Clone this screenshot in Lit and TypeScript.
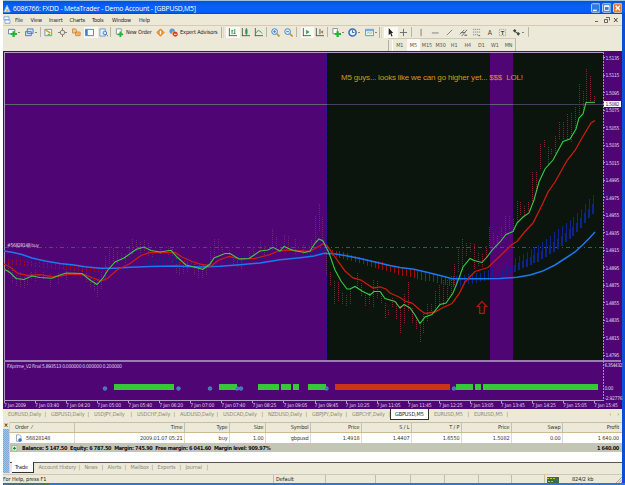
import { css, html, LitElement, svg } from "lit";
import { customElement, property } from "lit/decorators.js";
import { classMap } from "lit/directives/class-map.js";

type Point = [number, number];

const GREEN_MA: Point[] = [
  [4, 269], [10, 272.5], [16, 278.5], [24, 279.5], [32, 276], [40, 277.5],
  [52, 278.3], [60, 275], [66, 273], [82, 273.5], [90, 280], [97, 284.5],
  [103, 278], [108, 270], [115, 262], [124, 258], [136, 249.5], [144, 247],
  [151, 250.5], [160, 252], [171, 250.3], [177, 257], [186, 265], [194, 267],
  [203, 269.3], [210, 264], [214, 258], [225, 253.5], [230, 253.5],
  [239, 259], [249, 258.5], [260, 251], [268, 250], [273, 247.3], [280, 251],
  [284, 246.5], [293, 250.5], [305, 252.5], [310, 251], [315, 243],
  [319, 239], [323, 241], [329, 253], [335, 270], [341, 281], [347, 289],
  [350, 289], [355, 286.5], [362, 291], [370, 295], [374, 291.5],
  [380, 291.5], [385, 298.5], [395, 301.5], [400, 308], [404, 304.5],
  [410, 308], [415, 315], [420, 323.5], [425, 317], [432, 314.5],
  [440, 304.5], [446, 303], [453, 293], [459, 278], [463, 267], [470, 258.5],
  [474, 260.5], [482, 262.5], [487, 257], [493, 249], [500, 242],
  [506, 234.5], [513, 231.5], [517, 223], [523, 217], [529, 213], [534, 200],
  [539, 182], [545, 169], [553, 160], [563, 141.5], [570, 139], [576, 129],
  [579, 118], [583, 114], [586, 102.5], [595, 102.3],
];

const RED_MA: Point[] = [
  [4, 264], [10, 267], [18, 273.5], [28, 275.5], [40, 274.7], [52, 276.7],
  [60, 276], [70, 274], [84, 274.3], [93, 278], [101, 281], [108, 278],
  [117, 270], [130, 263.5], [141, 255.5], [150, 252.5], [175, 252.5],
  [182, 257], [192, 261.5], [202, 264.5], [211, 266], [218, 260.5],
  [229, 256.5], [241, 259], [255, 258.3], [270, 254.7], [278, 251],
  [290, 250], [310, 251.5], [316, 248], [323, 244], [327, 245.5],
  [335, 257], [345, 271], [353, 278], [361, 280], [373, 288], [380, 287],
  [386, 289], [390, 293], [400, 297.5], [405, 301], [412, 303], [420, 310],
  [425, 313.5], [435, 312], [443, 307.5], [452, 303.5], [459, 294],
  [465, 282], [475, 271.5], [488, 267.5], [500, 256], [512, 244.5],
  [517, 241.5], [525, 231.5], [533, 223], [543, 203], [548, 192],
  [555, 182], [567, 160.5], [575, 150.5], [582, 138], [591, 123],
  [595, 120.5],
];

const BLUE_MA: Point[] = [
  [4, 251], [12, 252.3], [22, 254.5], [32, 258], [45, 261], [60, 263.5],
  [74, 265], [85, 266.7], [100, 268.3], [115, 268.3], [130, 267.3],
  [150, 266.5], [175, 266], [200, 267], [220, 266.3], [240, 264.7],
  [260, 263], [280, 259.7], [300, 257.7], [314, 256], [324, 253.3],
  [334, 253.7], [345, 255.5], [360, 258.5], [375, 262], [390, 265.5],
  [400, 267.4], [414, 269.3], [428, 272.5], [444, 276.5], [452, 278.7],
  [480, 278.8], [500, 278.5], [517, 277.3], [530, 275], [542, 271.3],
  [555, 265], [565, 258.5], [575, 252], [583, 244.5], [590, 237.5],
  [595, 232],
];

// x, high, low
const CANDLES: [number, number, number][] = [
  [8, 264, 275], [12, 268, 283], [16, 275, 287], [20, 272, 287],
  [24, 277, 288], [27, 276, 286], [31, 272, 279], [35, 270, 281],
  [43, 272, 280], [50, 274, 287], [58, 273, 284], [66, 271, 281],
  [74, 268, 276], [82, 269, 277], [86, 273, 283], [90, 276, 288],
  [94, 278, 292], [97, 280, 297], [101, 272, 290], [105, 256, 282],
  [109, 247, 270], [113, 248, 262], [117, 252, 264], [121, 253, 261],
  [125, 254, 263], [129, 246, 258], [132, 239, 254], [136, 240, 252],
  [140, 242, 253], [144, 240, 252], [148, 243, 256], [152, 250, 257],
  [160, 249, 255], [168, 246, 256], [172, 249, 264], [176, 256, 274],
  [179, 262, 276], [183, 263, 275], [187, 263, 272], [194, 264, 275],
  [198, 267, 278], [202, 271, 279], [206, 268, 275], [210, 251, 265],
  [214, 239, 256], [218, 239, 251], [222, 247, 253], [229, 250, 257],
  [233, 257, 265], [237, 260, 268], [241, 260, 269], [249, 251, 259],
  [253, 247, 256], [260, 242, 251], [264, 246, 255], [272, 229, 250],
  [276, 237, 252], [284, 235, 247], [288, 236, 251], [295, 239, 255],
  [303, 245, 254], [311, 240, 250], [315, 216, 243], [319, 204, 232],
  [322, 217, 244], [326, 250, 275], [330, 272, 285], [334, 281, 305],
  [338, 282, 301], [342, 293, 304], [346, 295, 306], [350, 289, 305],
  [357, 273, 288], [361, 283, 297], [365, 295, 306], [369, 293, 305],
  [373, 280, 307], [377, 281, 298], [381, 292, 304], [385, 303, 319],
  [388, 310, 316], [392, 298, 308], [396, 302, 320], [400, 306, 333],
  [404, 294, 323], [408, 282, 312], [412, 308, 324], [416, 318, 329],
  [420, 325, 342], [423, 314, 334], [427, 304, 321], [431, 304, 314],
  [435, 291, 310], [439, 285, 306], [443, 280, 305], [447, 280, 300],
  [451, 276, 295], [454, 264, 285], [458, 247, 272], [462, 239, 271],
  [466, 243, 257], [470, 243, 253], [474, 244, 269], [478, 253, 267],
  [482, 254, 268], [486, 246, 258], [489, 227, 248], [493, 233, 245],
  [497, 236, 243], [501, 227, 240], [505, 216, 236], [509, 216, 230],
  [513, 219, 232], [517, 201, 222], [520, 202, 215], [524, 206, 216],
  [528, 202, 212], [532, 172, 202], [536, 172, 190], [540, 144, 170],
  [544, 140, 148], [548, 147, 164], [551, 149, 154], [555, 136, 153],
  [559, 122, 140], [563, 122, 140], [567, 114, 139], [571, 113, 143],
  [575, 107, 131], [579, 84, 115], [583, 91, 110], [586, 69, 103],
  [590, 76, 102], [594, 96, 106],
];

const CLOUD_TOP: Point[] = [
  [4, 259], [60, 264], [105, 268], [110, 265], [150, 259], [176, 256],
  [180, 259], [205, 265], [215, 261], [240, 256], [300, 253], [325, 248],
  [334, 250], [400, 267], [450, 277], [456, 276], [480, 273], [500, 265],
  [520, 256], [540, 244], [560, 228], [575, 216], [595, 193],
];

const CLOUD_BOTTOM: Point[] = [
  [4, 265], [60, 270], [105, 272], [110, 271], [150, 267], [176, 264],
  [180, 264], [205, 267], [215, 265], [240, 262], [300, 257], [325, 254],
  [334, 256], [400, 275], [450, 286], [456, 287], [480, 282], [500, 278],
  [520, 270], [540, 261], [560, 248], [575, 235], [595, 212],
];

const SIGNALS: [number, number, string][] = [
  [114, 174, "up"], [219, 237, "up"], [257.5, 279, "up"], [281, 291, "up"],
  [293, 299, "up"], [308, 326, "up"], [335, 450, "down"],
  [455.5, 473, "up"], [475, 481, "up"], [483, 597.5, "up"],
];

const PRICES = [
  "1.5135", "1.5115", "1.5095", "1.5075", "1.5055", "1.5035", "1.5015",
  "1.4995", "1.4975", "1.4955", "1.4935", "1.4915", "1.4895", "1.4875",
  "1.4855", "1.4835", "1.4815", "1.4795",
];

const TIMES = [
  "2009", "03:40", "04:20", "05:00", "05:40", "06:20", "07:00", "07:40",
  "08:25", "09:05", "09:45", "10:25", "11:05", "11:45", "12:25", "13:05",
  "13:45", "14:25", "15:05", "15:45",
];

function valueAt(line: Point[], x: number) {
  for (let i = 1; i < line.length; i++) {
    const [x0, y0] = line[i - 1];
    const [x1, y1] = line[i];
    if (x <= x1) return y0 + ((x - x0) / (x1 - x0)) * (y1 - y0);
  }
  return line[line.length - 1][1];
}

function isBearish(x: number) {
  return x < 108 || (x > 178 && x < 213) || (x > 330 && x < 454);
}

@customElement("price-chart")
export class PriceChart extends LitElement {
  static styles = css`
    :host {
      display: block;
      height: 358px;
      background: #4f0674;
    }
    svg {
      display: block;
      width: 620px;
      height: 358px;
      shape-rendering: crispEdges;
    }
    text {
      font-family: "DejaVu Sans Condensed", "DejaVu Sans", sans-serif;
      font-size: 5.1px;
      fill: #ded0e8;
    }
    .session {
      fill: #0b140d;
    }
    .frame {
      fill: #b49cc8;
    }
    .divider {
      fill: #9a7bb4;
    }
    .axis {
      stroke: #a58cbc;
      stroke-dasharray: 2 1;
    }
    .ma {
      fill: none;
      stroke-width: 1.1;
      shape-rendering: auto;
    }
    .green {
      stroke: #3bcc44;
    }
    .red {
      stroke: #cc1c0e;
      stroke-width: 1.3;
    }
    .blue {
      stroke: #1c78ee;
      stroke-width: 1.5;
    }
    .candle {
      stroke: #86232f;
      stroke-dasharray: 1 1;
    }
    .candle.dim {
      stroke: #6b2a68;
    }
    .cloud-down {
      stroke: #a00c0c;
    }
    .cloud-up {
      stroke: #0c2390;
    }
    .order {
      stroke: #2d6063;
      stroke-dasharray: 4 3 1 3;
    }
    .bid {
      stroke: #45405f;
    }
    .bid-green {
      stroke: #5d6668;
    }
    .day {
      stroke: #1b1b9c;
      stroke-dasharray: 2 1;
    }
    .arrow {
      fill: none;
      stroke: #b51414;
      stroke-width: 1.2;
      shape-rendering: auto;
    }
    .up {
      fill: #38c738;
    }
    .down {
      fill: #cc3318;
    }
    .dot {
      fill: #3678b4;
      stroke: #6aa2cc;
      stroke-width: 0.6;
      shape-rendering: auto;
    }
    .note {
      font-family: "Liberation Sans", Arial, sans-serif;
      font-size: 8px;
      fill: #d69a12;
    }
    .tag {
      fill: #ffffff;
    }
    .tag-text {
      fill: #4f0674;
    }
  `;

  renderLine(points: Point[], name: string) {
    return svg`<polyline class="ma ${name}" points=${points.map((p) => p.join(",")).join(" ")} />`;
  }

  renderCloud() {
    const bars: number[] = [];
    for (let x = 8.5; x < 597; x += 3.9) bars.push(Math.floor(x) + 0.5);
    return bars.map((x) => {
      const top = valueAt(CLOUD_TOP, x);
      const bottom = valueAt(CLOUD_BOTTOM, x);
      const name = isBearish(x) ? "cloud-down" : "cloud-up";
      const half = (top + bottom) / 2;
      const dash = x < 326 ? "2 1" : "none";
      return svg`
        <line class=${name} stroke-dasharray=${dash} x1=${x} x2=${x} y1=${top} y2=${bottom} />
        ${x > 500 ? svg`<line class=${name} x1=${x - 1} x2=${x - 1} y1=${half} y2=${bottom} />` : ""}
      `;
    });
  }

  render() {
    return html`
      <svg viewBox="3 51 620 358">
        <rect class="session" x="327" y="53" width="163" height="307" />
        <rect class="session" x="513" y="53" width="90" height="307" />
        <rect class="frame" x="4" y="52" width="599" height="1" />
        <rect class="frame" x="4" y="52" width="1" height="349" />
        <rect class="divider" x="4" y="360" width="617" height="2" />
        <line class="day" x1="326.5" x2="326.5" y1="53" y2="360" />
        <line class="bid" x1="5" x2="603" y1="104.5" y2="104.5" />
        <line class="bid-green" x1="5" x2="327" y1="104.5" y2="104.5" />
        <line class="bid-green" x1="490" x2="513" y1="104.5" y2="104.5" />
        <line class="order" x1="5" x2="603" y1="247.5" y2="247.5" />
        ${CANDLES.map(([x, high, low]) => {
          const dim = x < 327 || (x > 490 && x < 513);
          return svg`<line class="candle ${dim ? "dim" : ""}" x1=${x + 0.5} x2=${x + 0.5} y1=${high} y2=${low} />`;
        })}
        ${this.renderCloud()} ${this.renderLine(BLUE_MA, "blue")}
        ${this.renderLine(RED_MA, "red")} ${this.renderLine(GREEN_MA, "green")}
        <path
          class="arrow"
          d="M482 301.5 L486.7 306.5 H484.3 V313.3 H479.7 V306.5 H477.3 Z"
        />
        <text class="note" x="341" y="80" textLength="182" xml:space="preserve">M5 guys... looks like we can go higher yet... $$$&#160; LOL!</text>
        <text x="7" y="247" textLength="32">#56828148 buy</text>
        <text x="7" y="368" textLength="115">FXprime_V2 Final 5.893513 0.000000 0.000000 0.200000</text>

        ${SIGNALS.map(
          ([from, to, name]) =>
            svg`<rect class=${name} x=${from} y="384" width=${to - from} height="6" />`,
        )}
        ${[105, 178.5, 210, 237, 241, 326.5, 454].map(
          (x) => svg`<circle class="dot" cx=${x} cy="388.5" r="1.8" />`,
        )}

        <line class="axis" x1="603.5" x2="603.5" y1="52" y2="401" />
        <rect class="frame" x="4" y="400" width="600" height="1" />
        ${TIMES.map(
          (time, i) => svg`
            <rect class="frame" x=${4 + i * 31.05} y="400" width="1" height="3" />
            <text x=${4 + i * 31.05} y="407" textLength=${i === 0 ? 22 : 24}>7 Jan ${time}</text>
          `,
        )}
        ${PRICES.map(
          (price, i) => svg`
            <rect class="frame" x="603" y=${57 + i * 17.5} width="2" height="1" />
            <text x="605.5" y=${59.5 + i * 17.5} textLength="14">${price}</text>
          `,
        )}
        <rect class="tag" x="604" y="101" width="17" height="6" />
        <text class="tag-text" x="605.5" y="106" textLength="14">1.5082</text>
        <text x="604.5" y="367" textLength="18">6.354432</text>
        <text x="604.5" y="390" textLength="9">0.00</text>
        <text x="604.5" y="399.5" textLength="18">-2.92776</text>
      </svg>
    `;
  }
}

const ICONS: Record<string, unknown> = {
  newChart: svg`<path fill="#fff" stroke="#4a7cb8" d="M.5 1.500h7v5h-7z"/><path fill="#25b42e" d="M5 3.500h2.500v2H10v2.300H7.500V10H5V7.800H3V5.500h2z"/>`,
  profiles: svg`<path fill="#cfe0f4" stroke="#4a7cb8" d="M2.500 1h6.500v5h-6.500zM.5 4h6.500v4.500H.5z"/>`,
  market: svg`<path fill="#fff6dc" stroke="#5c91c8" d="M1 1.500h7.500v7H1z"/><path stroke="#dd8a1c" stroke-width="1.500" d="M2 2.500l5 3"/><path stroke="#2c9650" d="M4 7h3"/>`,
  crosshair: svg`<circle cx="5" cy="5" r="2.500" fill="none" stroke="#777"/><path stroke="#777" d="M5 0v3M5 7v3M0 5h3M7 5h3"/>`,
  navigator: svg`<path fill="#f2c98c" stroke="#cc8444" d="M.5 1h3.500l1 1.500v3H.5zM4 4.500h5v4H4z"/><path fill="#f0b040" d="M5 5.500l2-1 2 2-2 2z"/>`,
  terminal: svg`<path fill="#fff" stroke="#3d7cc9" d="M.5 1.500h9v7h-9z"/><path fill="#3d7cc9" d="M1 2h2v6H1z"/>`,
  tester: svg`<path fill="#e9f1f9" stroke="#6a9bce" d="M1 1h6v8H1z"/><circle cx="6.500" cy="5.500" r="2" fill="#cfe4ff" stroke="#3d7cc9"/><path stroke="#3d7cc9" d="M8 7l2 2"/>`,
  order: svg`<path fill="#fff" stroke="#7f94a8" d="M1.500 1h5.500v6h-5.500z"/><path fill="#25b42e" d="M5 4h2v2h2v2H7v2H5V8H3V6h2z"/>`,
  editor: svg`<path fill="#f3a33a" stroke="#c96a18" d="M5 1l4 4-4 4-4-4z"/><path stroke="#fff" d="M5 3v4"/>`,
  expert: svg`<circle cx="3.500" cy="3.500" r="3" fill="#5c9bd2"/><path fill="#e8ae44" d="M3 4h5v3H3z"/><circle cx="7" cy="7" r="2.700" fill="#d83a20"/><path stroke="#fff" d="M5.500 7h3"/>`,
  bars: svg`<path fill="none" stroke="#555" d="M1.500 0v9M1 8.500h9"/><path stroke="#2c9650" d="M4.500 2v5M4 3h2M7.500 1v6M6 6h2"/>`,
  candles: svg`<path fill="none" stroke="#555" d="M1.500 0v9M1 8.500h9"/><path stroke="#2c9650" stroke-width="2.500" d="M6 1.500v5"/><path stroke="#2c9650" d="M6 0v8"/>`,
  line: svg`<path fill="none" stroke="#555" d="M1.500 0v9M1 8.500h9"/><path fill="none" stroke="#2c9650" d="M2 6c2-4 4-4 7 0"/>`,
  zoomIn: svg`<circle cx="4" cy="4" r="3.200" fill="#d8ecff" stroke="#3d7cc9"/><path stroke="#3d7cc9" d="M2.500 4h3M4 2.500v3"/><path stroke="#cc9134" stroke-width="1.800" d="M6.500 6.500l3 3"/>`,
  zoomOut: svg`<circle cx="4" cy="4" r="3.200" fill="#d8ecff" stroke="#3d7cc9"/><path stroke="#3d7cc9" d="M2.500 4h3"/><path stroke="#cc9134" stroke-width="1.800" d="M6.500 6.500l3 3"/>`,
  scroll: svg`<path fill="none" stroke="#555" d="M1.500 0v9M1 8.500h9"/><path fill="#2cb04a" d="M4.500 2l4 2.500-4 2.500z"/>`,
  shift: svg`<path fill="none" stroke="#555" d="M1.500 0v9M1 8.500h9M5.500 1v6"/><path fill="#b07a3c" d="M6 4.500l3-2v4z"/>`,
  indicators: svg`<path fill="#fff" stroke="#7f8c98" d="M1 .5h5v6H1z"/><path fill="#25b42e" d="M5 3.500h2.500v2H10v2.300H7.500V10H5V7.800H3V5.500h2z"/>`,
  periods: svg`<circle cx="5" cy="5" r="4" fill="#e2f0ff" stroke="#2c72cc" stroke-width="1.700"/><path fill="none" stroke="#333" stroke-width=".8" d="M5 2.500V5h2"/>`,
  template: svg`<path fill="#eaf3fb" stroke="#5c91c8" d="M.5 1.500h9v7h-9z"/><path stroke="#5c91c8" d="M1 3h8"/><path fill="none" stroke="#cc9134" stroke-width=".8" d="M2 6l2-1 2 1 2-1"/>`,
  cursor: svg`<path fill="#222" d="M3 0l5 5.500H6L7.300 9 6 9.500 4.800 6.200 3 8z"/>`,
  cross: svg`<path stroke="#666" d="M5 1v8M1 5h8"/>`,
  vline: svg`<path stroke="#777" d="M4.500 1v8"/>`,
  hline: svg`<path stroke="#777" d="M1 5.500h7.500"/>`,
  trend: svg`<path stroke="#777" d="M2 8l6-6"/>`,
  channel: svg`<path stroke="#666" d="M1 7l5-5M3 9l6-7M2 5h5"/><path stroke="#444" d="M6 8h3"/>`,
  fibo: svg`<path stroke="#888" stroke-dasharray="1.500 .7" d="M1 1.500h8M1 4.500h8M1 7.500h6"/><path stroke="#555" d="M7 8.500h2"/>`,
  text: svg`<text x="3" y="8" font-size="7" font-family="Liberation Sans" fill="#444">A</text>`,
  label: svg`<path fill="none" stroke="#999" stroke-dasharray="1 1" d="M1.500 1.500h7v7h-7z"/><text x="3" y="7.500" font-size="6.500" font-family="Liberation Sans" font-weight="bold" fill="#444">T</text>`,
  arrows: svg`<path fill="#444" d="M1 3l2-2 2 2-2 2zM5 6.500l2-2 2 2-2 2z"/><path stroke="#444" d="M3 4l4 2"/>`,
};

@customElement("tool-icon")
export class ToolIcon extends LitElement {
  static styles = css`
    :host {
      display: block;
      width: 9px;
      height: 9px;
      flex: none;
    }
    svg {
      display: block;
      width: 100%;
      height: 100%;
    }
  `;

  @property({ type: String }) name = "";

  render() {
    return html`<svg viewBox="0 0 10 10">${ICONS[this.name]}</svg>`;
  }
}

interface Tool {
  icon?: string;
  label?: string;
  kind?: "sep" | "grip";
  drop?: boolean;
  on?: boolean;
  width: number;
}

const TOOLS: Tool[] = [
  { icon: "newChart", drop: true, width: 17 },
  { icon: "profiles", drop: true, width: 16 },
  { kind: "sep", width: 3 },
  { icon: "market", width: 14 },
  { icon: "crosshair", width: 14 },
  { icon: "navigator", width: 13 },
  { icon: "terminal", on: true, width: 14 },
  { icon: "tester", width: 12 },
  { kind: "sep", width: 4 },
  { icon: "order", label: "New Order", width: 41 },
  { icon: "editor", width: 13 },
  { icon: "expert", label: "Expert Advisors", width: 53 },
  { kind: "grip", width: 6 },
  { icon: "bars", on: true, width: 13 },
  { icon: "candles", width: 13 },
  { icon: "line", width: 13 },
  { kind: "sep", width: 4 },
  { icon: "zoomIn", width: 13 },
  { icon: "zoomOut", width: 13 },
  { kind: "sep", width: 5 },
  { icon: "scroll", on: true, width: 13 },
  { icon: "shift", width: 13 },
  { kind: "sep", width: 4 },
  { icon: "indicators", drop: true, width: 16 },
  { icon: "periods", drop: true, width: 17 },
  { icon: "template", drop: true, width: 15 },
  { kind: "grip", width: 6 },
  { icon: "cursor", on: true, width: 13 },
  { icon: "cross", width: 13 },
  { kind: "sep", width: 5 },
  { icon: "vline", width: 14 },
  { icon: "hline", width: 14 },
  { icon: "trend", width: 14 },
  { icon: "channel", width: 13 },
  { icon: "fibo", width: 13 },
  { icon: "text", width: 13 },
  { icon: "label", width: 14 },
  { icon: "arrows", drop: true, width: 17 },
  { kind: "sep", width: 2 },
];

const PERIODS = ["M1", "M5", "M15", "M30", "H1", "H4", "D1", "W1", "MN"];

@customElement("tool-bars")
export class ToolBars extends LitElement {
  static styles = css`
    :host {
      display: block;
      height: 26px;
      font-size: 5.6px;
      color: #222;
    }
    .row {
      display: flex;
      height: 13px;
      box-sizing: border-box;
      align-items: center;
    }
    .main {
      padding-left: 4px;
      border-top: 1px solid #dcc9b4;
    }
    .periods {
      margin-left: 385px;
      width: 128px;
      color: #555;
      border-right: 1px solid #bdb8a4;
      border-top: 1px solid #cfcab6;
    }
    .tool {
      display: flex;
      align-items: center;
      flex: none;
      height: 11px;
      gap: 2px;
      padding-left: 1px;
      box-sizing: border-box;
      white-space: nowrap;
      letter-spacing: -0.12px;
    }
    .on {
      background: #fbfaf4;
    }
    .sep {
      border-left: 1px solid #bab59f;
      height: 10px;
    }
    .grip {
      border-left: 1px solid #b5b09b;
      border-right: 1px solid #fff;
      background: #dcd8c5;
      background-clip: content-box;
      padding: 0 2px 0 1px;
      height: 11px;
    }
    .drop::after {
      content: "";
      border: 1.5px solid transparent;
      border-top-color: #222;
      margin-top: 1px;
      margin-left: -1px;
    }
    .period {
      width: 13.6px;
      height: 12px;
      line-height: 12px;
      text-align: center;
      flex: none;
      font-size: 5.4px;
    }
  `;

  render() {
    return html`
      <div class="row main">
        ${TOOLS.map(
          (tool) => html`
            <div
              class=${classMap({
                tool: true,
                on: !!tool.on,
                drop: !!tool.drop,
                sep: tool.kind === "sep",
                grip: tool.kind === "grip",
              })}
              style="width: ${tool.width}px"
            >
              ${tool.icon ? html`<tool-icon name=${tool.icon}></tool-icon>` : ""}
              ${tool.label ?? ""}
            </div>
          `,
        )}
      </div>
      <div class="row periods">
        <div class="tool grip" style="width: 4px"></div>
        ${PERIODS.map(
          (period) =>
            html`<div class=${classMap({ period: true, on: period === "M5" })}>
              ${period}
            </div>`,
        )}
      </div>
    `;
  }
}

const CHART_TABS: [string, number][] = [
  ["EURUSD,Daily", 43], ["GBPUSD,Daily", 43], ["USDJPY,Daily", 43],
  ["USDCHF,Daily", 43], ["AUDUSD,Daily", 43], ["USDCAD,Daily", 45],
  ["NZDUSD,Daily", 44], ["GBPJPY,Daily", 40], ["GBPCHF,Daily", 43],
  ["GBPUSD,M5", 39], ["EURUSD,M5", 40], ["EURUSD,M5", 39],
];

const COLUMNS: [string, string][] = [
  ["Order  ⁄", "56828148"], ["Time", "2009.01.07 05:21"], ["Type", "buy"],
  ["Size", "1.00"], ["Symbol", "gbpusd"], ["Price", "1.4918"],
  ["S / L", "1.4407"], ["T / P", "1.6550"], ["Price", "1.5082"],
  ["Swap", "0.00"], ["Profit", "1 640.00"],
];

const TERMINAL_TABS: [string, number][] = [
  ["Account History", 46], ["News", 23], ["Alerts", 23], ["Mailbox", 27],
  ["Experts", 28], ["Journal", 27],
];

@customElement("trade-terminal")
export class TradeTerminal extends LitElement {
  static styles = css`
    :host {
      display: flex;
      height: 51px;
      font-size: 5.5px;
      letter-spacing: -0.1px;
      color: #333;
    }
    .handle {
      width: 6px;
      flex: none;
      background: repeating-conic-gradient(#7fa8d8 0 25%, #a9c3df 0 50%) 0 0 /
        2px 2px;
    }
    .close {
      height: 7px;
      background: #ece9d8;
      font-size: 6px;
      line-height: 6px;
      font-weight: bold;
      text-align: center;
      color: #222;
    }
    .body {
      flex: 1;
      min-width: 0;
      background: #fff;
      display: flex;
      flex-direction: column;
      border-left: 1px solid #d8d4c4;
    }
    .grid {
      display: grid;
      grid-template-columns: 65px 110px 45px 36px 45px 51px 50px 50px 50px 51px 1fr;
      height: 10px;
      line-height: 10px;
      text-align: right;
      white-space: pre;
    }
    .grid > div {
      padding-right: 1.5px;
      border-right: 1px solid #e0dccb;
    }
    .grid > div:first-child {
      text-align: left;
      padding-left: 5px;
    }
    .grid > div:last-child {
      border-right: none;
      padding-right: 3px;
    }
    .head {
      background: #ece9d8;
      border-top: 1px solid #c9bfa0;
      border-bottom: 1px solid #cdb994;
      height: 9px;
      line-height: 9px;
    }
    .head > div {
      border-color: #c6c2b0;
    }
    .grid > .first {
      display: flex;
      gap: 4px;
      padding-left: 1px;
      align-items: center;
    }
    .first svg,
    .balance svg {
      width: 7px;
      height: 8px;
      flex: none;
    }
    .balance {
      display: flex;
      align-items: center;
      height: 9px;
      background: repeating-conic-gradient(#c9c4b8 0 25%, #bcc3ca 0 50%) 0 0 /
        2px 2px;
      padding: 0 3px 0 1px;
      font-weight: bold;
      color: #111;
      font-size: 5.5px;
      letter-spacing: -0.28px;
    }
    .balance span {
      flex: 1;
      padding-left: 4px;
    }
    .space {
      flex: 1;
    }
    .tabs {
      display: flex;
      height: 10px;
      line-height: 9px;
      background: #ece9d8;
      border-top: 1px solid #555;
      color: #8b887c;
      padding-left: 2px;
    }
    .tabs > div {
      box-sizing: border-box;
      padding-left: 4.5px;
      flex: none;
      display: flex;
      justify-content: space-between;
      white-space: nowrap;
    }
    .tabs > div::after {
      content: "|";
    }
    .tabs > .current {
      width: 22px;
      background: #fff;
      color: #222;
      border-right: 1px solid #333;
      border-bottom: 1px solid #333;
      margin-top: -1px;
      line-height: 10px;
      padding-left: 3px;
    }
    .tabs > .current::after {
      content: none;
    }
  `;

  render() {
    return html`
      <div class="handle"><div class="close">×</div></div>
      <div class="body">
        <div class="grid head">${COLUMNS.map(([name]) => html`<div>${name}</div>`)}</div>
        <div class="grid">
          ${COLUMNS.map(([, value], i) =>
            i === 0
              ? html`<div class="first"><svg viewBox="0 0 7 8"><path fill="#fff" stroke="#8a97a8" stroke-width=".8" d="M1.500 .8h3l1.500 1.500v5h-4.500z"/><circle cx="5" cy="6" r="1.800" fill="#2c78cf"/></svg>${value}</div>`
              : html`<div>${value}</div>`,
          )}
        </div>
        <div class="balance">
          <svg viewBox="0 0 7 8"><path fill="#e6f3e2" stroke="#8aa58a" stroke-width=".6" d="M1 1.500h5v5.500H1z"/><path stroke="#1c9a2c" stroke-width="1.200" d="M2 4.300h3M3.500 2.800v3"/></svg>
          <span>Balance: 5 147.50&#160; Equity: 6 787.50&#160; Margin: 745.90&#160; Free margin: 6 041.60&#160; Margin level: 909.97%</span>
          1 640.00
        </div>
        <div class="space"></div>
        <div class="tabs">
          <div class="current">Trade</div>
          ${TERMINAL_TABS.map(
            ([name, width]) => html`<div style="width: ${width}px">${name}</div>`,
          )}
        </div>
      </div>
    `;
  }
}

const MENU: [string, number][] = [
  ["File", 15.5], ["View", 18.5], ["Insert", 20.5], ["Charts", 22.5],
  ["Tools", 20], ["Window", 27], ["Help", 15],
];

@customElement("app-root")
export class AppRoot extends LitElement {
  static styles = css`
    :host {
      display: flex;
      flex-direction: column;
      box-sizing: border-box;
      width: 625px;
      height: 485px;
      padding-left: 3px;
      background: #fff;
      overflow: hidden;
      font-family: "DejaVu Sans Condensed", "DejaVu Sans", sans-serif;
      font-size: 5.5px;
      color: #222;
    }
    .title {
      display: flex;
      align-items: center;
      height: 14px;
      box-sizing: border-box;
      border-top: 1px solid #9cc4dc;
      padding: 1px 3px 0 0;
      background: linear-gradient(#0a50d8, #0560fa 35%, #0560fa 85%, #0345c4);
      color: #fff;
      flex: none;
    }
    .logo {
      width: 8px;
      height: 9px;
      margin: 0 2px 0 0;
    }
    .title span {
      flex: 1;
      font-family: "Open Sans", "Noto Sans", sans-serif;
      font-size: 6.8px;
      letter-spacing: -0.17px;
    }
    .buttons {
      display: flex;
      gap: 1.5px;
    }
    .buttons svg {
      display: block;
      width: 9.5px;
      height: 10px;
    }
    .window {
      flex: none;
      height: 469px;
      background: #ece9d8;
      border-right: 3px solid #0a50d4;
      box-sizing: border-box;
    }
    .menu {
      display: flex;
      align-items: center;
      height: 11px;
      padding-right: 2px;
      letter-spacing: -0.1px;
    }
    .menu svg {
      width: 8px;
      height: 8px;
      margin-right: 4px;
    }
    .menu .item {
      flex: none;
    }
    .menu .fill {
      flex: 1;
    }
    .menu .mdi {
      width: 26px;
      height: 8px;
      margin: 0;
    }
    .chart-tabs {
      display: flex;
      height: 13px;
      align-items: flex-start;
      line-height: 10px;
      color: #8b887c;
      white-space: nowrap;
      letter-spacing: -0.12px;
    }
    .chart-tabs > div {
      box-sizing: border-box;
      padding-left: 5px;
      flex: none;
      display: flex;
      justify-content: space-between;
    }
    .chart-tabs > div::after {
      content: "|";
    }
    .chart-tabs > .current {
      background: #fff;
      border: 1px solid #333;
      border-top: none;
      color: #222;
      padding-left: 4px;
    }
    .chart-tabs > .current::after,
    .chart-tabs > .nav::after {
      content: none;
    }
    .chart-tabs > .nav {
      margin-left: auto;
      gap: 6px;
      padding-right: 3px;
    }
    .status {
      display: flex;
      height: 9px;
      line-height: 9px;
      margin-top: 1px;
      border-top: 1px solid #d0c8b4;
    }
    .status > div {
      flex: none;
      box-sizing: border-box;
      border-right: 1px solid #c2bda9;
      white-space: nowrap;
      letter-spacing: -0.06px;
    }
    .status .default {
      padding-left: 2px;
    }
    .status .end {
      display: flex;
      gap: 13px;
      border: none;
      padding-left: 2px;
      align-items: center;
      flex: 1;
    }
    .traffic {
      width: 12px;
      height: 6px;
    }
    .grip {
      width: 7px;
      height: 7px;
      margin: 1px 0 0 auto;
    }
    .taskbar {
      flex: 1;
      background: linear-gradient(90deg, #4d6a88 40px, #56773c 40px 46px, #2a78dc 46px);
    }
  `;

  render() {
    return html`
      <div class="title">
        <svg class="logo" viewBox="0 0 8 9"><path fill="#e8f0fa" stroke="#6fb0ee" stroke-width=".8" d="M4 1l3.300 7H.7z"/><path fill="#e2ad38" d="M3.300 5h2v2.500h-2z"/></svg>
        <span>6086766: FXDD - MetaTrader - Demo Account - [GBPUSD,M5]</span>
        <div class="buttons">
          <svg viewBox="0 0 10 10"><rect x=".5" y=".5" width="9" height="9" rx="1" fill="#2f7ce0" stroke="#b9d8f6"/><path stroke="#fff" stroke-width="1.500" d="M2 7.500h4"/></svg>
          <svg viewBox="0 0 10 10"><rect x=".5" y=".5" width="9" height="9" rx="1" fill="#2f7ce0" stroke="#b9d8f6"/><path fill="none" stroke="#fff" d="M2.500 2.500h5v5h-5zM2.500 3.500h5"/></svg>
          <svg viewBox="0 0 10 10"><rect x=".5" y=".5" width="9" height="9" rx="1" fill="#dd7c2c" stroke="#f3d6b4"/><path stroke="#fff" stroke-width="1.400" d="M2.700 2.700l4.600 4.600M7.300 2.700l-4.600 4.600"/></svg>
        </div>
      </div>
      <div class="window">
        <div class="menu">
          <svg viewBox="0 0 8 8"><path fill="#fff" stroke="#6a9bdc" stroke-width=".8" d="M1 .8h5v3H1zM2 3.800h5v3.500H2z"/></svg>
          ${MENU.map(
            ([name, width]) =>
              html`<div class="item" style="width: ${width}px">${name}</div>`,
          )}
          <div class="fill"></div>
          <svg class="mdi" viewBox="0 0 26 8"><path fill="none" stroke="#444" stroke-width=".8" d="M1 5.500h3M10.500 3.500h3v3h-3zM12 1.500h3.500v3"/><path stroke="#444" d="M20 2l3.500 4M23.500 2L20 6"/></svg>
        </div>
        <tool-bars></tool-bars>
        <price-chart></price-chart>
        <div class="chart-tabs">
          ${CHART_TABS.map(
            ([name, width], i) => html`
              <div
                class=${classMap({ current: i === 9 })}
                style="width: ${width}px"
              >
                ${name}
              </div>
            `,
          )}
          <div class="nav"><span>‹</span><span>›</span></div>
        </div>
        <trade-terminal></trade-terminal>
        <div class="status">
          <div style="width: 271px">For Help, press F1</div>
          <div class="default" style="width: 52px">Default</div>
          ${[50, 35, 34, 34, 33, 33].map(
            (width) => html`<div style="width: ${width}px"></div>`,
          )}
          <div class="end">
            <svg class="traffic" viewBox="0 0 12 6"><path fill="#3f6b3a" d="M0 0h12v6H0z"/><path stroke="#b8cc30" stroke-dasharray="2 1" d="M0 1.500h8M1 4.500h6"/><path stroke="#2c78a8" stroke-dasharray="2 1" d="M6 3h6"/></svg>
            824/2 kb
            <svg class="grip" viewBox="0 0 7 7"><path stroke="#aaa58f" d="M0 7l7-7M2.500 7L7 2.500M5 7l2-2"/></svg>
          </div>
        </div>
      </div>
      <div class="taskbar"></div>
    `;
  }
}
